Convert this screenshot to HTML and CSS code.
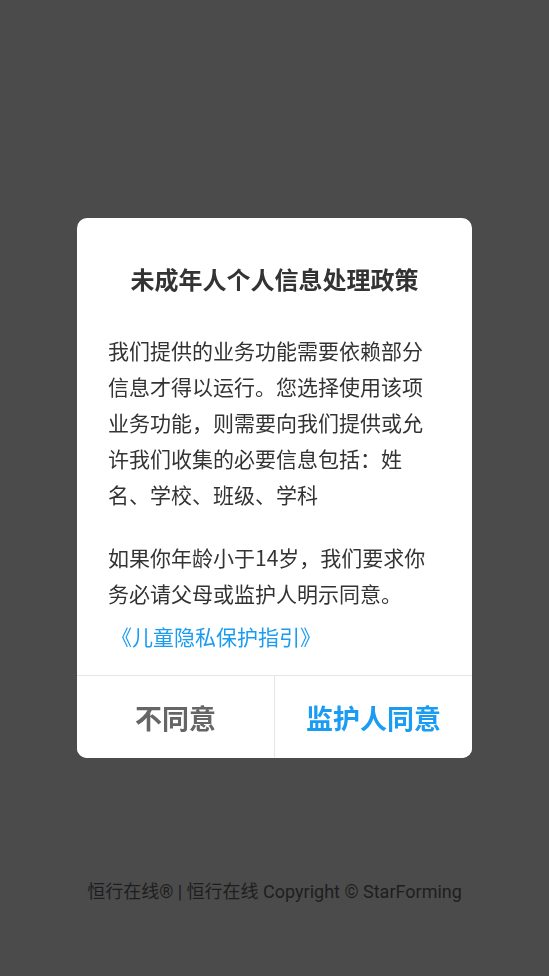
FILE: index.html
```html
<!DOCTYPE html>
<html lang="zh-CN">
<head>
<meta charset="utf-8">
<title>未成年人个人信息处理政策</title>
<link rel="stylesheet" href="styles.css">
</head>
<body>
<div class="page">
  <footer class="footer">恒行在线® | 恒行在线 Copyright © StarForming</footer>
</div>
<div class="mask">
  <div class="dialog">
    <div class="dialog-body">
      <h1 class="title">未成年人个人信息处理政策</h1>
      <p class="para">我们提供的业务功能需要依赖部分信息才得以运行。您选择使用该项业务功能，则需要向我们提供或允许我们收集的必要信息包括：姓名、学校、班级、学科</p>
      <p class="para para-second">如果你年龄小于14岁，我们要求你务必请父母或监护人明示同意。</p>
      <a class="link">《儿童隐私保护指引》</a>
    </div>
    <div class="actions">
      <button class="btn btn-cancel">不同意</button>
      <button class="btn btn-ok">监护人同意</button>
    </div>
  </div>
</div>
</body>
</html>
```

FILE: styles.css
```css
html, body {
  margin: 0;
  padding: 0;
}
body {
  background: #4b4b4b;
  font-family: "Noto Sans CJK SC", "Noto Sans", sans-serif;
  width: 549px;
  height: 976px;
  overflow: hidden;
}
.page {
  height: 976px;
  display: flex;
  flex-direction: column;
  justify-content: flex-end;
}
.footer {
  font-family: Roboto, "Noto Sans CJK SC", sans-serif;
  font-size: 18px;
  line-height: 24px;
  color: #1e1e1e;
  text-align: center;
  padding-bottom: 72px;
}
.mask {
  position: fixed;
  inset: 0;
  display: flex;
  align-items: center;
  justify-content: center;
}
.dialog {
  width: 395px;
  background: #fff;
  border-radius: 10px;
  overflow: hidden;
}
.dialog-body {
  padding: 46px 31px 21px 31px;
  display: flex;
  flex-direction: column;
}
.title {
  margin: 0;
  font-size: 24px;
  line-height: 30px;
  font-weight: 700;
  color: #333;
  text-align: center;
}
.para {
  margin: 38px 0 0 0;
  font-size: 21px;
  line-height: 36px;
  color: #333;
}
.para-second {
  margin-top: 27px;
}
.link {
  margin-top: 7px;
  margin-left: 3px;
  font-size: 21px;
  line-height: 36px;
  color: #1a9cf2;
}
.actions {
  display: flex;
  border-top: 1px solid #e6e6e6;
  height: 82px;
}
.btn {
  flex: 1;
  border: none;
  background: #fff;
  font-family: "Noto Sans CJK SC", sans-serif;
  font-size: 27px;
  font-weight: 700;
  padding: 0;
  margin: 0;
}
.btn-cancel {
  color: #666;
  border-right: 1px solid #e6e6e6;
}
.btn-ok {
  color: #1a9cf2;
}
```
